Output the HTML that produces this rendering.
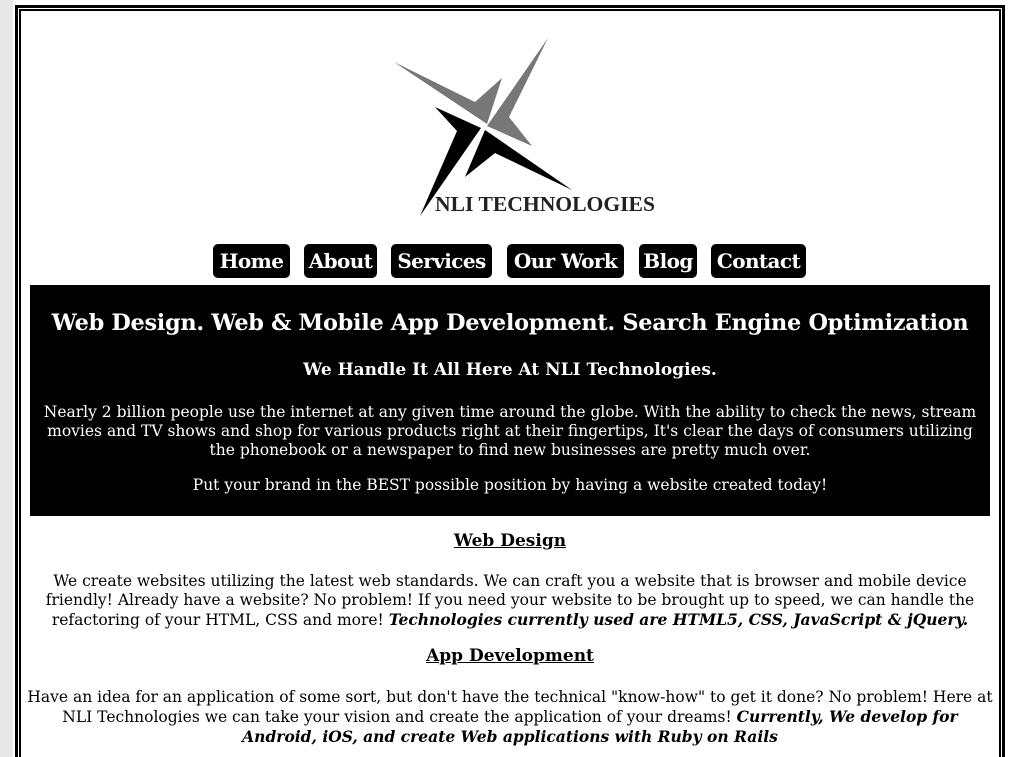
<!DOCTYPE html>
<html><head><meta charset="utf-8"><style>
html,body{margin:0;padding:0;width:1027px;height:757px;overflow:hidden}
body{background:#fff;position:relative;font-family:"DejaVu Serif","Liberation Serif",serif}
.gray{position:absolute;left:0;top:0;width:13px;height:757px;background:#e8e8e8}
.frame{position:absolute;left:15px;top:5px;width:984px;height:760px;border:3px solid #000;border-bottom:0;background:#fff}
.inner{position:absolute;left:1px;top:1px;right:1px;bottom:0;border:2px solid #000;border-bottom:0}
.nav{position:absolute;top:244px;left:0;width:1027px;height:34px}
.nav a{position:absolute;top:0;height:34px;background:#000;color:#fff;border-radius:5px;font-weight:bold;font-size:20px;line-height:34px;text-align:center;text-decoration:none;letter-spacing:-0.6px}
.hero{position:absolute;left:30px;top:285px;width:960px;height:231px;background:#000;color:#fff;text-align:center}
.hero h1{font-size:22.4px;margin:0;position:absolute;top:25px;width:100%;letter-spacing:-0.3px}
.hero h2{font-size:17px;margin:0;position:absolute;top:75px;width:100%}
.hero p{font-size:15.5px;line-height:19px;margin:0;position:absolute;left:10px;width:940px}
.c{position:absolute;left:38px;width:944px;text-align:center;font-size:15.5px;line-height:19px}
.h{font-weight:bold;text-decoration:underline;font-size:17px}
</style></head><body>
<div class="gray"></div>
<div class="frame"><div class="inner"></div></div>
<svg style="position:absolute;left:0;top:0" width="1027" height="230">
<polygon points="394,62 475,102 502,78 487,124" fill="#777"/>
<polygon points="548,38 509,117 532,146 487,126" fill="#777"/>
<polygon points="435,107 481,128 420,216 457,131" fill="#000"/>
<polygon points="485,130 572,190 495,153 465,177" fill="#000"/>
<text x="435" y="211" font-family="Liberation Serif,serif" font-weight="bold" font-size="21" fill="#222" textLength="220" lengthAdjust="spacingAndGlyphs">NLI TECHNOLOGIES</text>
</svg>
<div class="nav">
<a style="left:213px;width:77px">Home</a>
<a style="left:304px;width:73px">About</a>
<a style="left:391px;width:101px">Services</a>
<a style="left:507px;width:117px">Our Work</a>
<a style="left:639px;width:58px">Blog</a>
<a style="left:711px;width:95px">Contact</a>
</div>
<div class="hero">
<h1>Web Design. Web &amp; Mobile App Development. Search Engine Optimization</h1>
<h2>We Handle It All Here At NLI Technologies.</h2>
<p style="top:118px">Nearly 2 billion people use the internet at any given time around the globe. With the ability to check the news, stream movies and TV shows and shop for various products right at their fingertips, It's clear the days of consumers utilizing the phonebook or a newspaper to find new businesses are pretty much over.</p>
<p style="top:191px">Put your brand in the BEST possible position by having a website created today!</p>
</div>
<div class="c h" style="top:532px">Web Design</div>
<div class="c" style="top:572px">We create websites utilizing the latest web standards. We can craft you a website that is browser and mobile device friendly! Already have a website? No problem! If you need your website to be brought up to speed, we can handle the refactoring of your HTML, CSS and more! <b><i>Technologies currently used are HTML5, CSS, JavaScript &amp; jQuery.</i></b></div>
<div class="c h" style="top:647px">App Development</div>
<div class="c" style="top:688px;left:24px;width:972px">Have an idea for an application of some sort, but don't have the technical "know-how" to get it done? No problem! Here at NLI Technologies we can take your vision and create the application of your dreams! <b><i>Currently, We develop for Android, iOS, and create Web applications with Ruby on Rails</i></b></div>
</body></html>
